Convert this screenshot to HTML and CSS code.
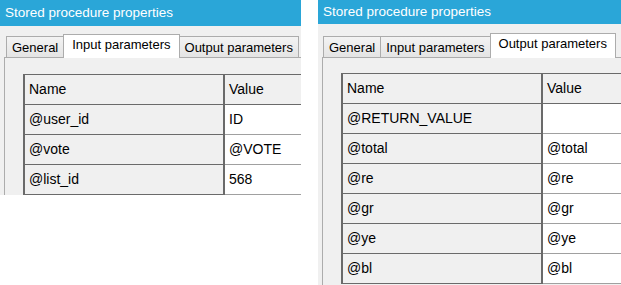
FILE: index.html
```html
<!DOCTYPE html>
<html>
<head>
    <title>Stored procedure properties</title>
    <link rel="stylesheet" href="styles.css">
</head>
<body>
    <div class="shots">
        <section class="dialog dialog-input">
            <div class="title">Stored procedure properties</div>
            <div class="tabs">
                <div class="tab">General</div>
                <div class="tab active">Input parameters</div>
                <div class="tab">Output parameters</div>
            </div>
            <div class="page">
                <div class="params">
                    <div class="prow head"><div class="pname">Name</div><div class="pval">Value</div></div>
                    <div class="prow"><div class="pname">@user_id</div><div class="pval">ID</div></div>
                    <div class="prow"><div class="pname">@vote</div><div class="pval">@VOTE</div></div>
                    <div class="prow"><div class="pname">@list_id</div><div class="pval">568</div></div>
                </div>
            </div>
        </section>

        <section class="dialog dialog-output">
            <div class="title">Stored procedure properties</div>
            <div class="tabs">
                <div class="tab">General</div>
                <div class="tab">Input parameters</div>
                <div class="tab active">Output parameters</div>
            </div>
            <div class="page">
                <div class="params">
                    <div class="prow head"><div class="pname">Name</div><div class="pval">Value</div></div>
                    <div class="prow"><div class="pname">@RETURN_VALUE</div><div class="pval"></div></div>
                    <div class="prow"><div class="pname">@total</div><div class="pval">@total</div></div>
                    <div class="prow"><div class="pname">@re</div><div class="pval">@re</div></div>
                    <div class="prow"><div class="pname">@gr</div><div class="pval">@gr</div></div>
                    <div class="prow"><div class="pname">@ye</div><div class="pval">@ye</div></div>
                    <div class="prow"><div class="pname">@bl</div><div class="pval">@bl</div></div>
                </div>
            </div>
        </section>
    </div>
</body>
</html>
```

FILE: styles.css
```css
body {
    margin: 0;
    padding: 0;
    background-color: #fff;
    font-family: "Liberation Sans", Arial, sans-serif;
    color: #000;
}
.shots {
    display: flex;
    align-items: flex-start;
    gap: 17px;
}
.dialog {
    background-color: #f0f0f0;
    display: flex;
    flex-direction: column;
    overflow: hidden;
}
.dialog-input {
    width: 301px;
    height: 195px;
}
.dialog-output {
    width: 303px;
    height: 285px;
}
.title {
    height: 26px;
    line-height: 26px;
    padding-left: 5px;
    background-color: #2aa6d8;
    color: #fff;
    font-size: 13.5px;
    white-space: nowrap;
}
.dialog-output .title {
    height: 24px;
    line-height: 24px;
}
.tabs {
    display: flex;
    align-items: flex-end;
    height: 23px;
    margin-top: 8px;
    padding-left: 6px;
    font-size: 13px;
    white-space: nowrap;
}
.dialog-output .tabs {
    height: 24px;
    margin-top: 9px;
    padding-left: 5px;
}
.tab {
    box-sizing: border-box;
    height: 21px;
    line-height: 21px;
    padding: 0 5px;
    border: 1px solid #acacac;
    border-bottom: none;
    margin-right: -1px;
    background: linear-gradient(#f3f3f3, #e4e4e4);
}
.tab.active {
    position: relative;
    z-index: 1;
    height: calc(100% + 1px);
    line-height: 20px;
    padding: 0 8px;
    margin-bottom: -1px;
    background: #fff;
}
.page {
    flex-grow: 1;
    margin-left: 4px;
    padding: 16px 0 0 18px;
    border-top: 1px solid #acacac;
    border-left: 1px solid #acacac;
}
.dialog-output .page {
    padding-top: 15px;
}
.params {
    width: max-content;
    border-top: 1px solid #6a6a6a;
    border-left: 2px solid #6a6a6a;
    font-size: 14px;
}
.prow {
    display: grid;
    grid-template-columns: 200px 120px;
    height: 30px;
}
.pname,
.pval {
    box-sizing: border-box;
    padding-left: 4px;
    line-height: 29px;
    white-space: nowrap;
}
.pname {
    background-color: #f0f0f0;
    border-right: 2px solid #6a6a6a;
    border-bottom: 1px solid #6a6a6a;
}
.pval {
    background-color: #fff;
    border-bottom: 1px solid #a0a0a0;
}
.head .pval {
    background-color: #f0f0f0;
    border-bottom-color: #6a6a6a;
}
```
